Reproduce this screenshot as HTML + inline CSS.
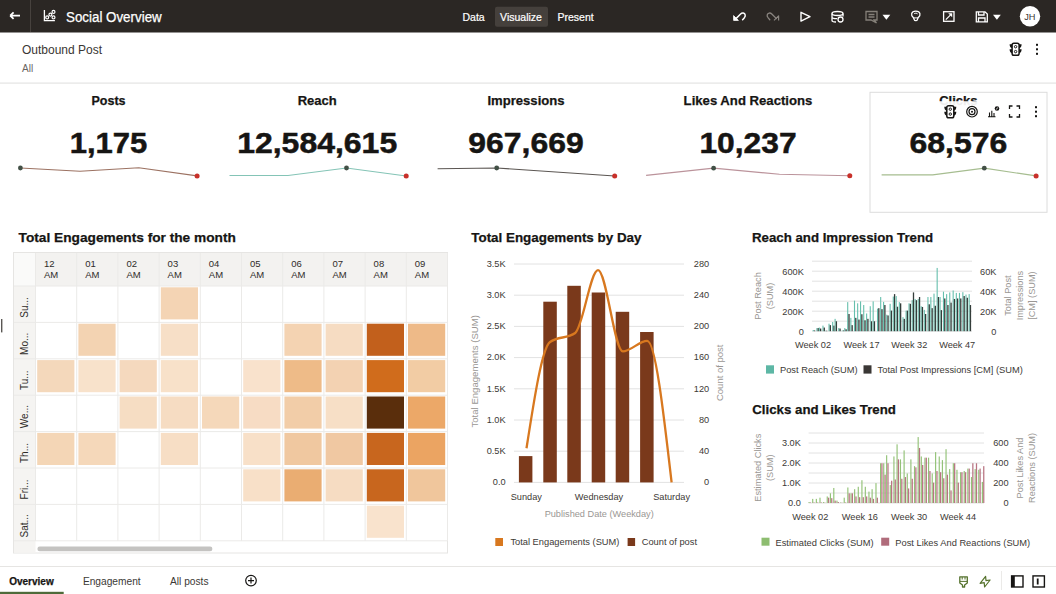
<!DOCTYPE html>
<html><head><meta charset="utf-8"><title>Social Overview</title>
<style>
html,body{margin:0;padding:0;background:#fff;width:1056px;height:594px;overflow:hidden}
svg{display:block;font-family:"Liberation Sans", sans-serif}
</style></head><body>
<svg width="1056" height="594" viewBox="0 0 1056 594">
<rect x="0" y="0" width="1056" height="32.5" fill="#2b2724"/>
<line x1="30.5" y1="0" x2="30.5" y2="32" stroke="#47423e" stroke-width="1"/>
<path d="M10.5 15.6 H20 M10.2 15.6 L13.6 12.3 M10.2 15.6 L13.6 18.9" stroke="#fff" stroke-width="1.8" fill="none"/>
<path d="M44.4 10 V20.6 H54.9" stroke="#fff" stroke-width="1.3" fill="none"/>
<circle cx="47.2" cy="17.4" r="1.45" stroke="#fff" stroke-width="1.2" fill="none"/><circle cx="50.4" cy="14.6" r="1.45" stroke="#fff" stroke-width="1.2" fill="none"/><circle cx="53.5" cy="11.9" r="1.45" stroke="#fff" stroke-width="1.2" fill="none"/><circle cx="53.5" cy="17.4" r="1.45" stroke="#fff" stroke-width="1.2" fill="none"/>
<text x="66" y="22" font-size="14" fill="#fff" stroke="#fff" stroke-width="0.25" textLength="95.7" lengthAdjust="spacingAndGlyphs">Social Overview</text>
<rect x="495" y="6.8" width="53" height="20" rx="2" fill="#45403c"/>
<text x="462.5" y="20.5" font-size="10.5" fill="#fff" font-weight="normal" text-anchor="start" stroke="#fff" stroke-width="0.2">Data</text>
<text x="521" y="20.5" font-size="10.5" fill="#fff" font-weight="normal" text-anchor="middle" stroke="#fff" stroke-width="0.2">Visualize</text>
<text x="557.5" y="20.5" font-size="10.5" fill="#fff" font-weight="normal" text-anchor="start" stroke="#fff" stroke-width="0.2">Present</text>
<path d="M736 18.6 L740.6 14 C742.2 12.4 744.6 12.8 745.2 14.8 C745.6 16 745 17 744 18.2 L742.6 19.8" stroke="#fff" stroke-width="1.5" fill="none" stroke-linecap="round"/>
<path d="M733.6 20.4 L733.6 15.6 L738.4 20.4 Z" fill="#fff" stroke="#fff" stroke-width="0.8" stroke-linejoin="round"/>
<path d="M776.4 18.6 L771.8 14 C770.2 12.4 767.8 12.8 767.2 14.8 C766.8 16 767.4 17 768.4 18.2 L769.8 19.8" stroke="#8a8580" stroke-width="1.3" fill="none" stroke-linecap="round"/>
<path d="M778.6 20.4 L778.6 15.8 L774 20.4" fill="none" stroke="#8a8580" stroke-width="1.2" stroke-linejoin="round"/>
<path d="M801 12.3 L810 16.7 L801 21.1 Z" stroke="#fff" stroke-width="1.4" fill="none" stroke-linejoin="round"/>
<ellipse cx="837.5" cy="13.5" rx="5.5" ry="2" stroke="#fff" stroke-width="1.3" fill="none"/><path d="M832 13.5 V20.5 C832 21.5 834 22 836 22 M843 13.5 V16.5 M832 17 C832 18 834 18.7 837 18.7" stroke="#fff" stroke-width="1.3" fill="none"/><circle cx="840.5" cy="19.5" r="2.5" stroke="#fff" stroke-width="1.3" fill="none"/>
<path d="M866 11.5 H877 V20 H874 L876.5 23 L871 20 H866 Z M868.5 14.5 H874.5 M868.5 17 H874.5" stroke="#858079" stroke-width="1.3" fill="none"/>
<path d="M882.5 14.7 H890.3 L886.4 19.7 Z" fill="#fff"/>
<path d="M913.4 17.6 C910.6 15.6 910.8 11.2 915.8 11.2 C920.8 11.2 921 15.6 918.2 17.6 L917.4 19.6 C917 21 914.6 21 914.2 19.6 Z" stroke="#fff" stroke-width="1.3" fill="none" stroke-linejoin="round"/><path d="M913.6 17.9 H918 M914 13.9 C914.5 13 917.1 13 917.6 13.9" stroke="#fff" stroke-width="1" fill="none"/>
<rect x="943.6" y="11.7" width="10.4" height="9.6" stroke="#fff" stroke-width="1.3" fill="none"/><path d="M945.8 19.6 L950.6 14.8" stroke="#fff" stroke-width="1.2" fill="none"/><path d="M952.2 13.3 L952.2 17.3 L948.2 13.3 Z" fill="#fff"/>
<path d="M976.3 11.8 H985 L987.3 14 V21.8 H976.3 Z M978.5 11.8 V15 H984 V11.8 M978.5 21.8 V18 H985 V21.8" stroke="#fff" stroke-width="1.3" fill="none"/>
<path d="M993 14.7 H1000.8 L996.9 19.7 Z" fill="#fff"/>
<circle cx="1030" cy="16.3" r="10.2" fill="#fff"/>
<text x="1029.8" y="19.6" font-size="9.2" fill="#3c3835" font-weight="normal" text-anchor="middle" >JH</text>
<text x="22" y="54" font-size="12" fill="#3a3633" font-weight="normal" text-anchor="start" >Outbound Post</text>
<text x="22" y="72" font-size="10" fill="#6a6561" font-weight="normal" text-anchor="start" >All</text>
<rect x="0" y="82.5" width="1056" height="1.2" fill="#e4e4e3"/>
<rect x="1012.1" y="43.2" width="7" height="12" rx="1.8" stroke="#161513" stroke-width="1.5" fill="none"/><circle cx="1015.6" cy="46.7" r="1.2" stroke="#161513" stroke-width="1" fill="none"/><circle cx="1015.6" cy="51.6" r="1.2" stroke="#161513" stroke-width="1" fill="none"/><path d="M1012.1 44.2 H1009.6 Q1009.6 47.7 1012.1 48.2 Z M1012.1 49.2 H1009.6 Q1009.6 52.7 1012.1 53.2 Z M1019.1 44.2 H1021.6 Q1021.6 47.7 1019.1 48.2 Z M1019.1 49.2 H1021.6 Q1021.6 52.7 1019.1 53.2 Z" fill="#161513"/>
<rect x="1036" y="43.8" width="2" height="2" fill="#161513"/><rect x="1036" y="48.3" width="2" height="2" fill="#161513"/><rect x="1036" y="52.8" width="2" height="2" fill="#161513"/>
<text x="108.5" y="105.3" font-size="12.5" fill="#161513" font-weight="bold" text-anchor="middle"  stroke="#161513" stroke-width="0.25">Posts</text>
<text x="108.5" y="153.2" font-size="29" font-weight="bold" fill="#161513" stroke="#161513" stroke-width="0.5" text-anchor="middle" textLength="77.6" lengthAdjust="spacingAndGlyphs">1,175</text>
<path d="M20.4 168 L80 171.2 L138.8 167.8 L197.1 175.9" stroke="#9c7262" stroke-width="1.15" fill="none"/>
<circle cx="20.4" cy="168" r="2.4" fill="#425046"/>
<circle cx="197.1" cy="175.9" r="2.5" fill="#c8302a"/>
<text x="317.2" y="105.3" font-size="13" fill="#161513" font-weight="bold" text-anchor="middle"  stroke="#161513" stroke-width="0.25">Reach</text>
<text x="317.2" y="153.2" font-size="29" font-weight="bold" fill="#161513" stroke="#161513" stroke-width="0.5" text-anchor="middle" textLength="160" lengthAdjust="spacingAndGlyphs">12,584,615</text>
<path d="M229.5 175.5 L288 175.5 L346.5 168 L406.2 176" stroke="#84c4b6" stroke-width="1.15" fill="none"/>
<circle cx="346.5" cy="168" r="2.4" fill="#425046"/>
<circle cx="406.2" cy="176" r="2.5" fill="#c8302a"/>
<text x="526" y="105.3" font-size="13.1" fill="#161513" font-weight="bold" text-anchor="middle"  stroke="#161513" stroke-width="0.25">Impressions</text>
<text x="526" y="153.2" font-size="29" font-weight="bold" fill="#161513" stroke="#161513" stroke-width="0.5" text-anchor="middle" textLength="115.5" lengthAdjust="spacingAndGlyphs">967,669</text>
<path d="M437.6 168.7 L496.7 168 L614.7 176" stroke="#5b5652" stroke-width="1.15" fill="none"/>
<circle cx="496.7" cy="168" r="2.4" fill="#425046"/>
<circle cx="614.7" cy="176" r="2.5" fill="#c8302a"/>
<text x="748" y="105.3" font-size="13.15" fill="#161513" font-weight="bold" text-anchor="middle"  stroke="#161513" stroke-width="0.25">Likes And Reactions</text>
<text x="748" y="153.2" font-size="29" font-weight="bold" fill="#161513" stroke="#161513" stroke-width="0.5" text-anchor="middle" textLength="97.1" lengthAdjust="spacingAndGlyphs">10,237</text>
<path d="M646.1 175.4 L713.6 168.2 L779.4 174.3 L849.8 175.8" stroke="#bb939b" stroke-width="1.15" fill="none"/>
<circle cx="713.6" cy="168.2" r="2.4" fill="#425046"/>
<circle cx="849.8" cy="175.8" r="2.5" fill="#c8302a"/>
<text x="958.4" y="153.2" font-size="29" font-weight="bold" fill="#161513" stroke="#161513" stroke-width="0.5" text-anchor="middle" textLength="97.8" lengthAdjust="spacingAndGlyphs">68,576</text>
<path d="M881.6 174.8 L932.7 174.8 L984.3 168.2 L1036.1 175.9" stroke="#a6bd90" stroke-width="1.15" fill="none"/>
<circle cx="984.3" cy="168.2" r="2.4" fill="#425046"/>
<circle cx="1036.1" cy="175.9" r="2.5" fill="#c8302a"/>
<rect x="870" y="92.3" width="177" height="120" stroke="#dcdcdc" stroke-width="1" fill="none"/>
<text x="958.4" y="105.3" font-size="13" fill="#161513" font-weight="bold" text-anchor="middle"  stroke="#161513" stroke-width="0.25">Clicks</text>
<rect x="936" y="101.2" width="110" height="19" fill="#fff" fill-opacity="0.93"/>
<rect x="946.8" y="105.7" width="7" height="12" rx="1.8" stroke="#161513" stroke-width="1.5" fill="none"/><circle cx="950.3" cy="109.2" r="1.2" stroke="#161513" stroke-width="1" fill="none"/><circle cx="950.3" cy="114.10000000000001" r="1.2" stroke="#161513" stroke-width="1" fill="none"/><path d="M946.8 106.7 H944.3 Q944.3 110.2 946.8 110.7 Z M946.8 111.7 H944.3 Q944.3 115.2 946.8 115.7 Z M953.8 106.7 H956.3 Q956.3 110.2 953.8 110.7 Z M953.8 111.7 H956.3 Q956.3 115.2 953.8 115.7 Z" fill="#161513"/>
<circle cx="972" cy="111.7" r="5.3" stroke="#161513" stroke-width="1.2" fill="none"/><circle cx="972" cy="111.7" r="3" stroke="#161513" stroke-width="1.2" fill="none"/><circle cx="972" cy="111.7" r="1" fill="#161513"/>
<path d="M988 116.8 H995.5 M989.5 116.8 V112.5 M991.8 116.8 V110.8 M994 116.8 V113" stroke="#161513" stroke-width="1.1" fill="none"/><circle cx="997" cy="108.5" r="2.3" fill="#161513"/><path d="M995.8 109.6 L998.2 107.4" stroke="#fff" stroke-width="0.8"/>
<path d="M1009.5 109 V106 H1012.5 M1016.5 106 H1019.5 V109 M1019.5 114 V117 H1016.5 M1012.5 117 H1009.5 V114" stroke="#161513" stroke-width="1.3" fill="none"/>
<rect x="1035" y="106.2" width="2" height="2" fill="#161513"/><rect x="1035" y="110.7" width="2" height="2" fill="#161513"/><rect x="1035" y="115.2" width="2" height="2" fill="#161513"/>
<text x="18.6" y="241.8" font-size="13.7" fill="#161513" font-weight="bold" text-anchor="start"  stroke="#161513" stroke-width="0.25">Total Engagements for the month</text>
<rect x="13.5" y="252.5" width="434" height="300.5" fill="#fff" stroke="#e6e5e3" stroke-width="1"/>
<rect x="14" y="253" width="433" height="33" fill="#f3f2f0"/>
<rect x="14" y="253" width="21.5" height="299.5" fill="#f5f4f2"/>
<rect x="14" y="253" width="21.5" height="33" fill="#fafaf9"/>
<text x="44.0" y="266.9" font-size="9.5" fill="#2f2c29" font-weight="normal" text-anchor="start" >12</text>
<text x="44.0" y="277.9" font-size="9.5" fill="#2f2c29" font-weight="normal" text-anchor="start" >AM</text>
<text x="85.2" y="266.9" font-size="9.5" fill="#2f2c29" font-weight="normal" text-anchor="start" >01</text>
<text x="85.2" y="277.9" font-size="9.5" fill="#2f2c29" font-weight="normal" text-anchor="start" >AM</text>
<text x="126.4" y="266.9" font-size="9.5" fill="#2f2c29" font-weight="normal" text-anchor="start" >02</text>
<text x="126.4" y="277.9" font-size="9.5" fill="#2f2c29" font-weight="normal" text-anchor="start" >AM</text>
<text x="167.60000000000002" y="266.9" font-size="9.5" fill="#2f2c29" font-weight="normal" text-anchor="start" >03</text>
<text x="167.60000000000002" y="277.9" font-size="9.5" fill="#2f2c29" font-weight="normal" text-anchor="start" >AM</text>
<text x="208.8" y="266.9" font-size="9.5" fill="#2f2c29" font-weight="normal" text-anchor="start" >04</text>
<text x="208.8" y="277.9" font-size="9.5" fill="#2f2c29" font-weight="normal" text-anchor="start" >AM</text>
<text x="250.0" y="266.9" font-size="9.5" fill="#2f2c29" font-weight="normal" text-anchor="start" >05</text>
<text x="250.0" y="277.9" font-size="9.5" fill="#2f2c29" font-weight="normal" text-anchor="start" >AM</text>
<text x="291.20000000000005" y="266.9" font-size="9.5" fill="#2f2c29" font-weight="normal" text-anchor="start" >06</text>
<text x="291.20000000000005" y="277.9" font-size="9.5" fill="#2f2c29" font-weight="normal" text-anchor="start" >AM</text>
<text x="332.40000000000003" y="266.9" font-size="9.5" fill="#2f2c29" font-weight="normal" text-anchor="start" >07</text>
<text x="332.40000000000003" y="277.9" font-size="9.5" fill="#2f2c29" font-weight="normal" text-anchor="start" >AM</text>
<text x="373.6" y="266.9" font-size="9.5" fill="#2f2c29" font-weight="normal" text-anchor="start" >08</text>
<text x="373.6" y="277.9" font-size="9.5" fill="#2f2c29" font-weight="normal" text-anchor="start" >AM</text>
<text x="414.8" y="266.9" font-size="9.5" fill="#2f2c29" font-weight="normal" text-anchor="start" >09</text>
<text x="414.8" y="277.9" font-size="9.5" fill="#2f2c29" font-weight="normal" text-anchor="start" >AM</text>
<line x1="35.5" y1="253" x2="35.5" y2="541" stroke="#ebeae8" stroke-width="1"/>
<line x1="76.7" y1="253" x2="76.7" y2="541" stroke="#ebeae8" stroke-width="1"/>
<line x1="117.9" y1="253" x2="117.9" y2="541" stroke="#ebeae8" stroke-width="1"/>
<line x1="159.10000000000002" y1="253" x2="159.10000000000002" y2="541" stroke="#ebeae8" stroke-width="1"/>
<line x1="200.3" y1="253" x2="200.3" y2="541" stroke="#ebeae8" stroke-width="1"/>
<line x1="241.5" y1="253" x2="241.5" y2="541" stroke="#ebeae8" stroke-width="1"/>
<line x1="282.70000000000005" y1="253" x2="282.70000000000005" y2="541" stroke="#ebeae8" stroke-width="1"/>
<line x1="323.90000000000003" y1="253" x2="323.90000000000003" y2="541" stroke="#ebeae8" stroke-width="1"/>
<line x1="365.1" y1="253" x2="365.1" y2="541" stroke="#ebeae8" stroke-width="1"/>
<line x1="406.3" y1="253" x2="406.3" y2="541" stroke="#ebeae8" stroke-width="1"/>
<line x1="447.5" y1="253" x2="447.5" y2="541" stroke="#ebeae8" stroke-width="1"/>
<line x1="14" y1="286.0" x2="447" y2="286.0" stroke="#ebeae8" stroke-width="1"/>
<line x1="14" y1="322.4" x2="447" y2="322.4" stroke="#ebeae8" stroke-width="1"/>
<line x1="14" y1="358.8" x2="447" y2="358.8" stroke="#ebeae8" stroke-width="1"/>
<line x1="14" y1="395.2" x2="447" y2="395.2" stroke="#ebeae8" stroke-width="1"/>
<line x1="14" y1="431.6" x2="447" y2="431.6" stroke="#ebeae8" stroke-width="1"/>
<line x1="14" y1="468.0" x2="447" y2="468.0" stroke="#ebeae8" stroke-width="1"/>
<line x1="14" y1="504.4" x2="447" y2="504.4" stroke="#ebeae8" stroke-width="1"/>
<line x1="14" y1="540.8" x2="447" y2="540.8" stroke="#ebeae8" stroke-width="1"/>
<text x="0" y="0" font-size="10" fill="#2f2c29" text-anchor="middle" transform="translate(28.4 307.4) rotate(-90)">Su...</text>
<text x="0" y="0" font-size="10" fill="#2f2c29" text-anchor="middle" transform="translate(28.4 343.79999999999995) rotate(-90)">Mo...</text>
<text x="0" y="0" font-size="10" fill="#2f2c29" text-anchor="middle" transform="translate(28.4 380.2) rotate(-90)">Tu...</text>
<text x="0" y="0" font-size="10" fill="#2f2c29" text-anchor="middle" transform="translate(28.4 416.59999999999997) rotate(-90)">We...</text>
<text x="0" y="0" font-size="10" fill="#2f2c29" text-anchor="middle" transform="translate(28.4 453.0) rotate(-90)">Th...</text>
<text x="0" y="0" font-size="10" fill="#2f2c29" text-anchor="middle" transform="translate(28.4 489.4) rotate(-90)">Fri...</text>
<text x="0" y="0" font-size="10" fill="#2f2c29" text-anchor="middle" transform="translate(28.4 525.8000000000001) rotate(-90)">Sat...</text>
<rect x="160.8" y="287.3" width="37.2" height="32.1" fill="#f4d4b4"/>
<rect x="78.4" y="323.7" width="37.2" height="32.1" fill="#f3d3b2"/>
<rect x="160.8" y="323.7" width="37.2" height="32.1" fill="#f7dfc7"/>
<rect x="284.4" y="323.7" width="37.2" height="32.1" fill="#f4d3b2"/>
<rect x="325.6" y="323.7" width="37.2" height="32.1" fill="#f6dcc2"/>
<rect x="366.8" y="323.7" width="37.2" height="32.1" fill="#c2601c"/>
<rect x="408.0" y="323.7" width="37.2" height="32.1" fill="#eeba88"/>
<rect x="37.2" y="360.1" width="37.2" height="32.1" fill="#f4d8bb"/>
<rect x="78.4" y="360.1" width="37.2" height="32.1" fill="#f8e2cb"/>
<rect x="119.6" y="360.1" width="37.2" height="32.1" fill="#f5d9be"/>
<rect x="160.8" y="360.1" width="37.2" height="32.1" fill="#f8e1c9"/>
<rect x="243.2" y="360.1" width="37.2" height="32.1" fill="#f9e2cc"/>
<rect x="284.4" y="360.1" width="37.2" height="32.1" fill="#eebb88"/>
<rect x="325.6" y="360.1" width="37.2" height="32.1" fill="#f3d2b2"/>
<rect x="366.8" y="360.1" width="37.2" height="32.1" fill="#d06c1c"/>
<rect x="408.0" y="360.1" width="37.2" height="32.1" fill="#f2cca4"/>
<rect x="119.6" y="396.5" width="37.2" height="32.1" fill="#f6ddc3"/>
<rect x="160.8" y="396.5" width="37.2" height="32.1" fill="#f6dcc2"/>
<rect x="202.0" y="396.5" width="37.2" height="32.1" fill="#f5d8ba"/>
<rect x="243.2" y="396.5" width="37.2" height="32.1" fill="#f7dcc4"/>
<rect x="284.4" y="396.5" width="37.2" height="32.1" fill="#f2cda8"/>
<rect x="325.6" y="396.5" width="37.2" height="32.1" fill="#f7dfc6"/>
<rect x="366.8" y="396.5" width="37.2" height="32.1" fill="#5a2e0c"/>
<rect x="408.0" y="396.5" width="37.2" height="32.1" fill="#eca868"/>
<rect x="37.2" y="432.9" width="37.2" height="32.1" fill="#f4d6b6"/>
<rect x="78.4" y="432.9" width="37.2" height="32.1" fill="#f5d8ba"/>
<rect x="160.8" y="432.9" width="37.2" height="32.1" fill="#f7dec5"/>
<rect x="243.2" y="432.9" width="37.2" height="32.1" fill="#f8e0c8"/>
<rect x="284.4" y="432.9" width="37.2" height="32.1" fill="#f0c8a0"/>
<rect x="325.6" y="432.9" width="37.2" height="32.1" fill="#f0c8a2"/>
<rect x="366.8" y="432.9" width="37.2" height="32.1" fill="#c8661e"/>
<rect x="408.0" y="432.9" width="37.2" height="32.1" fill="#eba462"/>
<rect x="243.2" y="469.3" width="37.2" height="32.1" fill="#f8e0c8"/>
<rect x="284.4" y="469.3" width="37.2" height="32.1" fill="#eaad72"/>
<rect x="325.6" y="469.3" width="37.2" height="32.1" fill="#f6dcc2"/>
<rect x="366.8" y="469.3" width="37.2" height="32.1" fill="#c8661e"/>
<rect x="408.0" y="469.3" width="37.2" height="32.1" fill="#f0c69c"/>
<rect x="366.8" y="505.7" width="37.2" height="32.1" fill="#f9e3cd"/>
<rect x="37.4" y="546.6" width="175" height="4.6" rx="2.3" fill="#c4c3c1"/>
<text x="471.3" y="242.1" font-size="13.4" fill="#161513" font-weight="bold" text-anchor="start"  stroke="#161513" stroke-width="0.25">Total Engagements by Day</text>
<line x1="514" y1="482.4" x2="684" y2="482.4" stroke="#e2e2e2" stroke-width="1"/>
<text x="505.6" y="485.09999999999997" font-size="9.2" fill="#3c3935" font-weight="normal" text-anchor="end" >0.0</text>
<text x="709.2" y="485.09999999999997" font-size="9.2" fill="#3c3935" font-weight="normal" text-anchor="end" >0</text>
<line x1="514" y1="451.2" x2="684" y2="451.2" stroke="#e2e2e2" stroke-width="1"/>
<text x="505.6" y="453.9" font-size="9.2" fill="#3c3935" font-weight="normal" text-anchor="end" >0.5K</text>
<text x="709.2" y="453.9" font-size="9.2" fill="#3c3935" font-weight="normal" text-anchor="end" >40</text>
<line x1="514" y1="420.0" x2="684" y2="420.0" stroke="#e2e2e2" stroke-width="1"/>
<text x="505.6" y="422.7" font-size="9.2" fill="#3c3935" font-weight="normal" text-anchor="end" >1.0K</text>
<text x="709.2" y="422.7" font-size="9.2" fill="#3c3935" font-weight="normal" text-anchor="end" >80</text>
<line x1="514" y1="388.8" x2="684" y2="388.8" stroke="#e2e2e2" stroke-width="1"/>
<text x="505.6" y="391.49999999999994" font-size="9.2" fill="#3c3935" font-weight="normal" text-anchor="end" >1.5K</text>
<text x="709.2" y="391.49999999999994" font-size="9.2" fill="#3c3935" font-weight="normal" text-anchor="end" >120</text>
<line x1="514" y1="357.6" x2="684" y2="357.6" stroke="#e2e2e2" stroke-width="1"/>
<text x="505.6" y="360.29999999999995" font-size="9.2" fill="#3c3935" font-weight="normal" text-anchor="end" >2.0K</text>
<text x="709.2" y="360.29999999999995" font-size="9.2" fill="#3c3935" font-weight="normal" text-anchor="end" >160</text>
<line x1="514" y1="326.4" x2="684" y2="326.4" stroke="#e2e2e2" stroke-width="1"/>
<text x="505.6" y="329.09999999999997" font-size="9.2" fill="#3c3935" font-weight="normal" text-anchor="end" >2.5K</text>
<text x="709.2" y="329.09999999999997" font-size="9.2" fill="#3c3935" font-weight="normal" text-anchor="end" >200</text>
<line x1="514" y1="295.2" x2="684" y2="295.2" stroke="#e2e2e2" stroke-width="1"/>
<text x="505.6" y="297.9" font-size="9.2" fill="#3c3935" font-weight="normal" text-anchor="end" >3.0K</text>
<text x="709.2" y="297.9" font-size="9.2" fill="#3c3935" font-weight="normal" text-anchor="end" >240</text>
<line x1="514" y1="264.0" x2="684" y2="264.0" stroke="#e2e2e2" stroke-width="1"/>
<text x="505.6" y="266.7" font-size="9.2" fill="#3c3935" font-weight="normal" text-anchor="end" >3.5K</text>
<text x="709.2" y="266.7" font-size="9.2" fill="#3c3935" font-weight="normal" text-anchor="end" >280</text>
<rect x="518.9" y="456.1" width="13.5" height="26.3" fill="#7a391b"/>
<rect x="543.3" y="301.7" width="13.5" height="180.7" fill="#7a391b"/>
<rect x="567.3" y="285.8" width="13.5" height="196.6" fill="#7a391b"/>
<rect x="591.7" y="292.5" width="13.5" height="189.9" fill="#7a391b"/>
<rect x="615.7" y="311.8" width="13.5" height="170.6" fill="#7a391b"/>
<rect x="640.1" y="332" width="13.5" height="150.4" fill="#7a391b"/>
<path d="M526.5 448.3 C534.33 397.95 542.17 347.60 550 342 C558.40 336.00 566.80 339.00 575.2 333 C582.80 327.57 590.40 270.20 598 270.2 C606.27 270.20 614.53 351.40 622.8 351.4 C630.93 351.40 639.07 340.80 647.2 340.8 C655.33 340.80 663.47 411.60 671.6 482.4" stroke="#d8781f" stroke-width="2.3" fill="none"/>
<text x="526.3" y="499.7" font-size="9.2" fill="#3c3935" font-weight="normal" text-anchor="middle" >Sunday</text>
<text x="599" y="499.7" font-size="9.2" fill="#3c3935" font-weight="normal" text-anchor="middle" >Wednesday</text>
<text x="671.6" y="499.7" font-size="9.2" fill="#3c3935" font-weight="normal" text-anchor="middle" >Saturday</text>
<text x="599.2" y="517" font-size="9.2" fill="#9a9794" font-weight="normal" text-anchor="middle" >Published Date (Weekday)</text>
<text x="0" y="0" font-size="9.6" fill="#9a9794" text-anchor="middle" transform="translate(478 371.3) rotate(-90)">Total Engagements (SUM)</text>
<text x="0" y="0" font-size="9.5" fill="#9a9794" text-anchor="middle" transform="translate(722.8 372.8) rotate(-90)">Count of post</text>
<rect x="495.3" y="538" width="7.7" height="8" fill="#d8781f"/>
<text x="510.4" y="544.6" font-size="9.3" fill="#3c3935" font-weight="normal" text-anchor="start" >Total Engagements (SUM)</text>
<rect x="627.6" y="538" width="7.5" height="8" fill="#7a391b"/>
<text x="641.7" y="544.6" font-size="9.3" fill="#3c3935" font-weight="normal" text-anchor="start" >Count of post</text>
<text x="752" y="241.6" font-size="13.25" fill="#161513" font-weight="bold" text-anchor="start"  stroke="#161513" stroke-width="0.25">Reach and Impression Trend</text>
<line x1="812" y1="331.2" x2="972" y2="331.2" stroke="#e2e2e2" stroke-width="1"/>
<line x1="812" y1="321.2" x2="972" y2="321.2" stroke="#e2e2e2" stroke-width="1"/>
<line x1="812" y1="311.2" x2="972" y2="311.2" stroke="#e2e2e2" stroke-width="1"/>
<line x1="812" y1="301.2" x2="972" y2="301.2" stroke="#e2e2e2" stroke-width="1"/>
<line x1="812" y1="291.2" x2="972" y2="291.2" stroke="#e2e2e2" stroke-width="1"/>
<line x1="812" y1="281.2" x2="972" y2="281.2" stroke="#e2e2e2" stroke-width="1"/>
<line x1="812" y1="271.2" x2="972" y2="271.2" stroke="#e2e2e2" stroke-width="1"/>
<line x1="812" y1="261.2" x2="972" y2="261.2" stroke="#e2e2e2" stroke-width="1"/>
<text x="803.8" y="334.5" font-size="9.2" fill="#3c3935" font-weight="normal" text-anchor="end" >0</text>
<text x="803.8" y="314.5" font-size="9.2" fill="#3c3935" font-weight="normal" text-anchor="end" >200K</text>
<text x="803.8" y="294.5" font-size="9.2" fill="#3c3935" font-weight="normal" text-anchor="end" >400K</text>
<text x="803.8" y="274.5" font-size="9.2" fill="#3c3935" font-weight="normal" text-anchor="end" >600K</text>
<text x="996.4" y="334.5" font-size="9.2" fill="#3c3935" font-weight="normal" text-anchor="end" >0</text>
<text x="996.4" y="314.5" font-size="9.2" fill="#3c3935" font-weight="normal" text-anchor="end" >20K</text>
<text x="996.4" y="294.5" font-size="9.2" fill="#3c3935" font-weight="normal" text-anchor="end" >40K</text>
<text x="996.4" y="274.5" font-size="9.2" fill="#3c3935" font-weight="normal" text-anchor="end" >60K</text>
<text font-size="9.2" fill="#9a9794" text-anchor="middle" transform="translate(764 296) rotate(-90)"><tspan x="0" y="-3.2">Post Reach</tspan><tspan x="0" y="8.8">(SUM)</tspan></text>
<text font-size="9.2" fill="#9a9794" text-anchor="middle" transform="translate(1020 295.6) rotate(-90)"><tspan x="0" y="-9">Total Post</tspan><tspan x="0" y="3">Impressions</tspan><tspan x="0" y="15">[CM] (SUM)</tspan></text>
<rect x="812.73" y="329.99" width="1.1" height="1.21" fill="#66bfad"/>
<rect x="813.93" y="330.47" width="1.3" height="0.73" fill="#343d3a"/>
<rect x="816.37" y="328.05" width="1.1" height="3.15" fill="#66bfad"/>
<rect x="817.57" y="328.05" width="1.3" height="3.15" fill="#343d3a"/>
<rect x="818.79" y="327.56" width="1.1" height="3.64" fill="#66bfad"/>
<rect x="819.99" y="328.53" width="1.3" height="2.67" fill="#343d3a"/>
<rect x="822.43" y="325.62" width="1.1" height="5.58" fill="#66bfad"/>
<rect x="823.63" y="327.56" width="1.3" height="3.64" fill="#343d3a"/>
<rect x="824.85" y="330.72" width="1.1" height="0.48" fill="#66bfad"/>
<rect x="826.05" y="330.72" width="1.3" height="0.48" fill="#343d3a"/>
<rect x="828.49" y="323.68" width="1.1" height="7.52" fill="#66bfad"/>
<rect x="829.69" y="325.14" width="1.3" height="6.06" fill="#343d3a"/>
<rect x="832.13" y="321.99" width="1.1" height="9.21" fill="#66bfad"/>
<rect x="833.33" y="325.62" width="1.3" height="5.58" fill="#343d3a"/>
<rect x="834.55" y="318.84" width="1.1" height="12.36" fill="#66bfad"/>
<rect x="835.75" y="321.26" width="1.3" height="9.94" fill="#343d3a"/>
<rect x="838.19" y="328.05" width="1.1" height="3.15" fill="#66bfad"/>
<rect x="839.39" y="328.53" width="1.3" height="2.67" fill="#343d3a"/>
<rect x="841.82" y="330.47" width="1.1" height="0.73" fill="#66bfad"/>
<rect x="843.02" y="330.47" width="1.3" height="0.73" fill="#343d3a"/>
<rect x="844.25" y="328.05" width="1.1" height="3.15" fill="#66bfad"/>
<rect x="845.45" y="329.26" width="1.3" height="1.94" fill="#343d3a"/>
<rect x="847.16" y="302.11" width="1.1" height="29.09" fill="#66bfad"/>
<rect x="848.36" y="313.99" width="1.3" height="17.21" fill="#343d3a"/>
<rect x="850.31" y="317.87" width="1.1" height="13.33" fill="#66bfad"/>
<rect x="851.51" y="325.14" width="1.3" height="6.06" fill="#343d3a"/>
<rect x="853.95" y="300.65" width="1.1" height="30.55" fill="#66bfad"/>
<rect x="855.15" y="317.87" width="1.3" height="13.33" fill="#343d3a"/>
<rect x="857.10" y="303.32" width="1.1" height="27.88" fill="#66bfad"/>
<rect x="858.30" y="319.56" width="1.3" height="11.64" fill="#343d3a"/>
<rect x="860.01" y="301.38" width="1.1" height="29.82" fill="#66bfad"/>
<rect x="861.21" y="314.23" width="1.3" height="16.97" fill="#343d3a"/>
<rect x="863.16" y="305.02" width="1.1" height="26.18" fill="#66bfad"/>
<rect x="864.36" y="320.29" width="1.3" height="10.91" fill="#343d3a"/>
<rect x="866.07" y="313.50" width="1.1" height="17.70" fill="#66bfad"/>
<rect x="867.27" y="318.84" width="1.3" height="12.36" fill="#343d3a"/>
<rect x="869.70" y="306.23" width="1.1" height="24.97" fill="#66bfad"/>
<rect x="870.90" y="321.26" width="1.3" height="9.94" fill="#343d3a"/>
<rect x="872.61" y="301.38" width="1.1" height="29.82" fill="#66bfad"/>
<rect x="873.81" y="321.26" width="1.3" height="9.94" fill="#343d3a"/>
<rect x="876.98" y="308.65" width="1.1" height="22.55" fill="#66bfad"/>
<rect x="878.18" y="308.17" width="1.3" height="23.03" fill="#343d3a"/>
<rect x="880.13" y="297.02" width="1.1" height="34.18" fill="#66bfad"/>
<rect x="881.33" y="309.14" width="1.3" height="22.06" fill="#343d3a"/>
<rect x="883.04" y="301.87" width="1.1" height="29.33" fill="#66bfad"/>
<rect x="884.24" y="305.02" width="1.3" height="26.18" fill="#343d3a"/>
<rect x="886.19" y="314.72" width="1.1" height="16.48" fill="#66bfad"/>
<rect x="887.39" y="315.44" width="1.3" height="15.76" fill="#343d3a"/>
<rect x="889.58" y="303.81" width="1.1" height="27.39" fill="#66bfad"/>
<rect x="890.78" y="310.59" width="1.3" height="20.61" fill="#343d3a"/>
<rect x="892.73" y="296.53" width="1.1" height="34.67" fill="#66bfad"/>
<rect x="893.93" y="294.11" width="1.3" height="37.09" fill="#343d3a"/>
<rect x="895.64" y="296.05" width="1.1" height="35.15" fill="#66bfad"/>
<rect x="896.84" y="306.72" width="1.3" height="24.48" fill="#343d3a"/>
<rect x="898.79" y="302.11" width="1.1" height="29.09" fill="#66bfad"/>
<rect x="899.99" y="303.32" width="1.3" height="27.88" fill="#343d3a"/>
<rect x="902.43" y="317.14" width="1.1" height="14.06" fill="#66bfad"/>
<rect x="903.63" y="318.84" width="1.3" height="12.36" fill="#343d3a"/>
<rect x="905.58" y="310.59" width="1.1" height="20.61" fill="#66bfad"/>
<rect x="906.78" y="310.59" width="1.3" height="20.61" fill="#343d3a"/>
<rect x="908.49" y="303.32" width="1.1" height="27.88" fill="#66bfad"/>
<rect x="909.69" y="303.81" width="1.3" height="27.39" fill="#343d3a"/>
<rect x="911.64" y="300.17" width="1.1" height="31.03" fill="#66bfad"/>
<rect x="912.84" y="292.41" width="1.3" height="38.79" fill="#343d3a"/>
<rect x="914.55" y="298.96" width="1.1" height="32.24" fill="#66bfad"/>
<rect x="915.75" y="300.17" width="1.3" height="31.03" fill="#343d3a"/>
<rect x="917.70" y="298.96" width="1.1" height="32.24" fill="#66bfad"/>
<rect x="918.90" y="297.02" width="1.3" height="34.18" fill="#343d3a"/>
<rect x="920.61" y="306.23" width="1.1" height="24.97" fill="#66bfad"/>
<rect x="921.81" y="306.96" width="1.3" height="24.24" fill="#343d3a"/>
<rect x="923.76" y="309.87" width="1.1" height="21.33" fill="#66bfad"/>
<rect x="924.96" y="313.99" width="1.3" height="17.21" fill="#343d3a"/>
<rect x="927.40" y="297.02" width="1.1" height="34.18" fill="#66bfad"/>
<rect x="928.60" y="304.29" width="1.3" height="26.91" fill="#343d3a"/>
<rect x="930.31" y="297.02" width="1.1" height="34.18" fill="#66bfad"/>
<rect x="931.51" y="308.17" width="1.3" height="23.03" fill="#343d3a"/>
<rect x="933.46" y="293.62" width="1.1" height="37.58" fill="#66bfad"/>
<rect x="934.66" y="305.75" width="1.3" height="25.45" fill="#343d3a"/>
<rect x="936.61" y="267.93" width="1.1" height="63.27" fill="#66bfad"/>
<rect x="937.81" y="297.02" width="1.3" height="34.18" fill="#343d3a"/>
<rect x="939.52" y="297.02" width="1.1" height="34.18" fill="#66bfad"/>
<rect x="940.72" y="310.11" width="1.3" height="21.09" fill="#343d3a"/>
<rect x="942.92" y="291.68" width="1.1" height="39.52" fill="#66bfad"/>
<rect x="944.12" y="298.47" width="1.3" height="32.73" fill="#343d3a"/>
<rect x="946.07" y="294.11" width="1.1" height="37.09" fill="#66bfad"/>
<rect x="947.27" y="305.02" width="1.3" height="26.18" fill="#343d3a"/>
<rect x="949.22" y="292.41" width="1.1" height="38.79" fill="#66bfad"/>
<rect x="950.42" y="302.59" width="1.3" height="28.61" fill="#343d3a"/>
<rect x="952.61" y="290.47" width="1.1" height="40.73" fill="#66bfad"/>
<rect x="953.81" y="298.96" width="1.3" height="32.24" fill="#343d3a"/>
<rect x="955.76" y="292.90" width="1.1" height="38.30" fill="#66bfad"/>
<rect x="956.96" y="298.47" width="1.3" height="32.73" fill="#343d3a"/>
<rect x="958.92" y="292.90" width="1.1" height="38.30" fill="#66bfad"/>
<rect x="960.12" y="298.47" width="1.3" height="32.73" fill="#343d3a"/>
<rect x="962.31" y="292.17" width="1.1" height="39.03" fill="#66bfad"/>
<rect x="963.51" y="296.05" width="1.3" height="35.15" fill="#343d3a"/>
<rect x="965.46" y="294.59" width="1.1" height="36.61" fill="#66bfad"/>
<rect x="966.66" y="297.75" width="1.3" height="33.45" fill="#343d3a"/>
<rect x="968.61" y="294.11" width="1.1" height="37.09" fill="#66bfad"/>
<rect x="969.81" y="305.02" width="1.3" height="26.18" fill="#343d3a"/>
<text x="813" y="348.3" font-size="9.2" fill="#3c3935" font-weight="normal" text-anchor="middle" >Week 02</text>
<text x="861.5" y="348.3" font-size="9.2" fill="#3c3935" font-weight="normal" text-anchor="middle" >Week 17</text>
<text x="909.3" y="348.3" font-size="9.2" fill="#3c3935" font-weight="normal" text-anchor="middle" >Week 32</text>
<text x="957.2" y="348.3" font-size="9.2" fill="#3c3935" font-weight="normal" text-anchor="middle" >Week 47</text>
<rect x="766" y="365.3" width="8" height="8.3" fill="#5db7a5"/>
<text x="780" y="372.6" font-size="9.3" fill="#3c3935" font-weight="normal" text-anchor="start" >Post Reach (SUM)</text>
<rect x="863.5" y="365.3" width="8" height="8.3" fill="#3a3735"/>
<text x="877.6" y="372.6" font-size="9.3" fill="#3c3935" font-weight="normal" text-anchor="start" >Total Post Impressions [CM] (SUM)</text>
<text x="752.3" y="414.3" font-size="13.25" fill="#161513" font-weight="bold" text-anchor="start"  stroke="#161513" stroke-width="0.25">Clicks and Likes Trend</text>
<line x1="808.6" y1="503.0" x2="984" y2="503.0" stroke="#e2e2e2" stroke-width="1"/>
<line x1="808.6" y1="493.0" x2="984" y2="493.0" stroke="#e2e2e2" stroke-width="1"/>
<line x1="808.6" y1="483.0" x2="984" y2="483.0" stroke="#e2e2e2" stroke-width="1"/>
<line x1="808.6" y1="473.0" x2="984" y2="473.0" stroke="#e2e2e2" stroke-width="1"/>
<line x1="808.6" y1="463.0" x2="984" y2="463.0" stroke="#e2e2e2" stroke-width="1"/>
<line x1="808.6" y1="453.0" x2="984" y2="453.0" stroke="#e2e2e2" stroke-width="1"/>
<line x1="808.6" y1="443.0" x2="984" y2="443.0" stroke="#e2e2e2" stroke-width="1"/>
<line x1="808.6" y1="433.0" x2="984" y2="433.0" stroke="#e2e2e2" stroke-width="1"/>
<text x="800.8" y="506.3" font-size="9.2" fill="#3c3935" font-weight="normal" text-anchor="end" >0.0</text>
<text x="800.8" y="486.3" font-size="9.2" fill="#3c3935" font-weight="normal" text-anchor="end" >1.0K</text>
<text x="800.8" y="466.3" font-size="9.2" fill="#3c3935" font-weight="normal" text-anchor="end" >2.0K</text>
<text x="800.8" y="446.3" font-size="9.2" fill="#3c3935" font-weight="normal" text-anchor="end" >3.0K</text>
<text x="1008.5" y="506.3" font-size="9.2" fill="#3c3935" font-weight="normal" text-anchor="end" >0</text>
<text x="1008.5" y="486.3" font-size="9.2" fill="#3c3935" font-weight="normal" text-anchor="end" >200</text>
<text x="1008.5" y="466.3" font-size="9.2" fill="#3c3935" font-weight="normal" text-anchor="end" >400</text>
<text x="1008.5" y="446.3" font-size="9.2" fill="#3c3935" font-weight="normal" text-anchor="end" >600</text>
<text font-size="9.2" fill="#9a9794" text-anchor="middle" transform="translate(764.2 467.7) rotate(-90)"><tspan x="0" y="-3.5">Estimated Clicks</tspan><tspan x="0" y="8.5">(SUM)</tspan></text>
<text font-size="9.2" fill="#9a9794" text-anchor="middle" transform="translate(1026 468) rotate(-90)"><tspan x="0" y="-3.5">Post Likes And</tspan><tspan x="0" y="9.2">Reactions (SUM)</tspan></text>
<rect x="808.50" y="502.03" width="1.15" height="0.97" fill="#93c277"/>
<rect x="809.80" y="502.52" width="1.25" height="0.48" fill="#b87482"/>
<rect x="812.13" y="498.88" width="1.15" height="4.12" fill="#93c277"/>
<rect x="813.43" y="502.52" width="1.25" height="0.48" fill="#b87482"/>
<rect x="815.77" y="498.88" width="1.15" height="4.12" fill="#93c277"/>
<rect x="817.07" y="502.52" width="1.25" height="0.48" fill="#b87482"/>
<rect x="819.41" y="497.67" width="1.15" height="5.33" fill="#93c277"/>
<rect x="820.71" y="502.52" width="1.25" height="0.48" fill="#b87482"/>
<rect x="823.04" y="502.03" width="1.15" height="0.97" fill="#93c277"/>
<rect x="824.34" y="502.76" width="1.25" height="0.24" fill="#b87482"/>
<rect x="826.68" y="496.45" width="1.15" height="6.55" fill="#93c277"/>
<rect x="827.98" y="497.67" width="1.25" height="5.33" fill="#b87482"/>
<rect x="829.83" y="493.30" width="1.15" height="9.70" fill="#93c277"/>
<rect x="831.13" y="498.15" width="1.25" height="4.85" fill="#b87482"/>
<rect x="833.22" y="487.97" width="1.15" height="15.03" fill="#93c277"/>
<rect x="834.52" y="500.58" width="1.25" height="2.42" fill="#b87482"/>
<rect x="836.38" y="500.58" width="1.15" height="2.42" fill="#93c277"/>
<rect x="837.68" y="502.03" width="1.25" height="0.97" fill="#b87482"/>
<rect x="840.01" y="502.52" width="1.15" height="0.48" fill="#93c277"/>
<rect x="841.31" y="502.76" width="1.25" height="0.24" fill="#b87482"/>
<rect x="843.65" y="497.67" width="1.15" height="5.33" fill="#93c277"/>
<rect x="844.95" y="502.52" width="1.25" height="0.48" fill="#b87482"/>
<rect x="847.28" y="487.48" width="1.15" height="15.52" fill="#93c277"/>
<rect x="848.58" y="493.30" width="1.25" height="9.70" fill="#b87482"/>
<rect x="850.44" y="493.30" width="1.15" height="9.70" fill="#93c277"/>
<rect x="851.74" y="493.30" width="1.25" height="9.70" fill="#b87482"/>
<rect x="854.07" y="489.18" width="1.15" height="13.82" fill="#93c277"/>
<rect x="855.37" y="496.45" width="1.25" height="6.55" fill="#b87482"/>
<rect x="857.71" y="486.76" width="1.15" height="16.24" fill="#93c277"/>
<rect x="859.01" y="497.18" width="1.25" height="5.82" fill="#b87482"/>
<rect x="861.35" y="480.21" width="1.15" height="22.79" fill="#93c277"/>
<rect x="862.65" y="497.18" width="1.25" height="5.82" fill="#b87482"/>
<rect x="864.74" y="486.76" width="1.15" height="16.24" fill="#93c277"/>
<rect x="866.04" y="496.45" width="1.25" height="6.55" fill="#b87482"/>
<rect x="868.38" y="491.61" width="1.15" height="11.39" fill="#93c277"/>
<rect x="869.68" y="497.67" width="1.25" height="5.33" fill="#b87482"/>
<rect x="871.53" y="489.18" width="1.15" height="13.82" fill="#93c277"/>
<rect x="872.83" y="498.88" width="1.25" height="4.12" fill="#b87482"/>
<rect x="875.41" y="483.12" width="1.15" height="19.88" fill="#93c277"/>
<rect x="876.71" y="497.67" width="1.25" height="5.33" fill="#b87482"/>
<rect x="880.01" y="463.24" width="1.15" height="39.76" fill="#93c277"/>
<rect x="881.31" y="463.24" width="1.25" height="39.76" fill="#b87482"/>
<rect x="883.16" y="463.24" width="1.15" height="39.76" fill="#93c277"/>
<rect x="884.46" y="474.64" width="1.25" height="28.36" fill="#b87482"/>
<rect x="886.07" y="455.24" width="1.15" height="47.76" fill="#93c277"/>
<rect x="887.37" y="463.24" width="1.25" height="39.76" fill="#b87482"/>
<rect x="889.71" y="485.06" width="1.15" height="17.94" fill="#93c277"/>
<rect x="891.01" y="480.70" width="1.25" height="22.30" fill="#b87482"/>
<rect x="893.35" y="456.45" width="1.15" height="46.55" fill="#93c277"/>
<rect x="894.65" y="479.48" width="1.25" height="23.52" fill="#b87482"/>
<rect x="896.50" y="444.33" width="1.15" height="58.67" fill="#93c277"/>
<rect x="897.80" y="459.36" width="1.25" height="43.64" fill="#b87482"/>
<rect x="899.89" y="459.36" width="1.15" height="43.64" fill="#93c277"/>
<rect x="901.19" y="478.76" width="1.25" height="24.24" fill="#b87482"/>
<rect x="903.53" y="450.39" width="1.15" height="52.61" fill="#93c277"/>
<rect x="904.83" y="477.06" width="1.25" height="25.94" fill="#b87482"/>
<rect x="906.68" y="473.42" width="1.15" height="29.58" fill="#93c277"/>
<rect x="907.98" y="488.45" width="1.25" height="14.55" fill="#b87482"/>
<rect x="910.32" y="459.36" width="1.15" height="43.64" fill="#93c277"/>
<rect x="911.62" y="478.76" width="1.25" height="24.24" fill="#b87482"/>
<rect x="913.95" y="466.15" width="1.15" height="36.85" fill="#93c277"/>
<rect x="915.25" y="467.36" width="1.25" height="35.64" fill="#b87482"/>
<rect x="917.59" y="437.06" width="1.15" height="65.94" fill="#93c277"/>
<rect x="918.89" y="447.97" width="1.25" height="55.03" fill="#b87482"/>
<rect x="920.74" y="456.45" width="1.15" height="46.55" fill="#93c277"/>
<rect x="922.04" y="464.94" width="1.25" height="38.06" fill="#b87482"/>
<rect x="924.38" y="457.67" width="1.15" height="45.33" fill="#93c277"/>
<rect x="925.68" y="457.67" width="1.25" height="45.33" fill="#b87482"/>
<rect x="928.01" y="457.67" width="1.15" height="45.33" fill="#93c277"/>
<rect x="929.31" y="471.00" width="1.25" height="32.00" fill="#b87482"/>
<rect x="931.65" y="473.42" width="1.15" height="29.58" fill="#93c277"/>
<rect x="932.95" y="482.64" width="1.25" height="20.36" fill="#b87482"/>
<rect x="935.04" y="452.09" width="1.15" height="50.91" fill="#93c277"/>
<rect x="936.34" y="471.00" width="1.25" height="32.00" fill="#b87482"/>
<rect x="938.68" y="456.45" width="1.15" height="46.55" fill="#93c277"/>
<rect x="939.98" y="472.21" width="1.25" height="30.79" fill="#b87482"/>
<rect x="941.83" y="460.09" width="1.15" height="42.91" fill="#93c277"/>
<rect x="943.13" y="478.27" width="1.25" height="24.73" fill="#b87482"/>
<rect x="945.47" y="449.18" width="1.15" height="53.82" fill="#93c277"/>
<rect x="946.77" y="474.64" width="1.25" height="28.36" fill="#b87482"/>
<rect x="949.10" y="469.06" width="1.15" height="33.94" fill="#93c277"/>
<rect x="950.40" y="490.39" width="1.25" height="12.61" fill="#b87482"/>
<rect x="952.74" y="463.24" width="1.15" height="39.76" fill="#93c277"/>
<rect x="954.04" y="463.24" width="1.25" height="39.76" fill="#b87482"/>
<rect x="956.38" y="469.79" width="1.15" height="33.21" fill="#93c277"/>
<rect x="957.68" y="482.64" width="1.25" height="20.36" fill="#b87482"/>
<rect x="960.01" y="472.21" width="1.15" height="30.79" fill="#93c277"/>
<rect x="961.31" y="472.21" width="1.25" height="30.79" fill="#b87482"/>
<rect x="963.65" y="471.00" width="1.15" height="32.00" fill="#93c277"/>
<rect x="964.95" y="472.21" width="1.25" height="30.79" fill="#b87482"/>
<rect x="967.28" y="468.58" width="1.15" height="34.42" fill="#93c277"/>
<rect x="968.58" y="468.58" width="1.25" height="34.42" fill="#b87482"/>
<rect x="970.92" y="477.06" width="1.15" height="25.94" fill="#93c277"/>
<rect x="972.22" y="463.24" width="1.25" height="39.76" fill="#b87482"/>
<rect x="974.56" y="469.06" width="1.15" height="33.94" fill="#93c277"/>
<rect x="975.86" y="463.24" width="1.25" height="39.76" fill="#b87482"/>
<rect x="978.19" y="469.79" width="1.15" height="33.21" fill="#93c277"/>
<rect x="979.49" y="468.58" width="1.25" height="34.42" fill="#b87482"/>
<rect x="981.83" y="481.91" width="1.15" height="21.09" fill="#93c277"/>
<rect x="983.13" y="466.15" width="1.25" height="36.85" fill="#b87482"/>
<text x="810.3" y="520.3" font-size="9.2" fill="#3c3935" font-weight="normal" text-anchor="middle" >Week 02</text>
<text x="859.9" y="520.3" font-size="9.2" fill="#3c3935" font-weight="normal" text-anchor="middle" >Week 16</text>
<text x="909.1" y="520.3" font-size="9.2" fill="#3c3935" font-weight="normal" text-anchor="middle" >Week 30</text>
<text x="958" y="520.3" font-size="9.2" fill="#3c3935" font-weight="normal" text-anchor="middle" >Week 44</text>
<rect x="761.5" y="537.7" width="8" height="8" fill="#8dbd70"/>
<text x="775.5" y="545.5" font-size="9.3" fill="#3c3935" font-weight="normal" text-anchor="start" >Estimated Clicks (SUM)</text>
<rect x="881.2" y="537.7" width="8" height="8" fill="#b06c7b"/>
<text x="895.3" y="545.5" font-size="9.3" fill="#3c3935" font-weight="normal" text-anchor="start" >Post Likes And Reactions (SUM)</text>
<rect x="0" y="566" width="1056" height="1" fill="#e6e5e3"/>
<rect x="1" y="319" width="1.4" height="13.4" fill="#5a5754"/>
<text x="9.2" y="584.6" font-size="10" fill="#161513" font-weight="bold" text-anchor="start"  stroke="#161513" stroke-width="0.25">Overview</text>
<rect x="0" y="591.8" width="63.7" height="2.2" fill="#4e6b3a"/>
<text x="82.9" y="585" font-size="10.2" fill="#3c3935" font-weight="normal" text-anchor="start" >Engagement</text>
<text x="170" y="585" font-size="10.2" fill="#3c3935" font-weight="normal" text-anchor="start" >All posts</text>
<circle cx="251" cy="580.6" r="5.3" stroke="#161513" stroke-width="1.2" fill="none"/><path d="M251 577.6 V583.6 M248 580.6 H254" stroke="#161513" stroke-width="1.2"/>
<path d="M959.8 576.8 H967.3 V583 L964.6 585 V587 H962.5 V585 L959.8 583 Z" stroke="#55722c" stroke-width="1.3" fill="none" stroke-linejoin="round"/><path d="M962.2 577 V579.5 M965 577 V579.5 M960 581.4 H967" stroke="#55722c" stroke-width="1" fill="none"/>
<path d="M985.6 576.4 L980.1 583.3 L984.2 582.6 L984.6 587 L990.1 580 L986 580.7 Z" stroke="#55722c" stroke-width="1.2" fill="none" stroke-linejoin="round"/>
<rect x="1001" y="571" width="1" height="19" fill="#ebeae8"/>
<rect x="1011.6" y="575.9" width="11.4" height="11.1" stroke="#161513" stroke-width="1.4" fill="none"/><rect x="1011.6" y="575.9" width="3.2" height="11.1" fill="#161513"/>
<rect x="1033" y="575.9" width="11.4" height="11.1" stroke="#161513" stroke-width="1.4" fill="none"/><rect x="1036.8" y="578.5" width="1.8" height="6" fill="#161513"/>
</svg>
</body></html>
